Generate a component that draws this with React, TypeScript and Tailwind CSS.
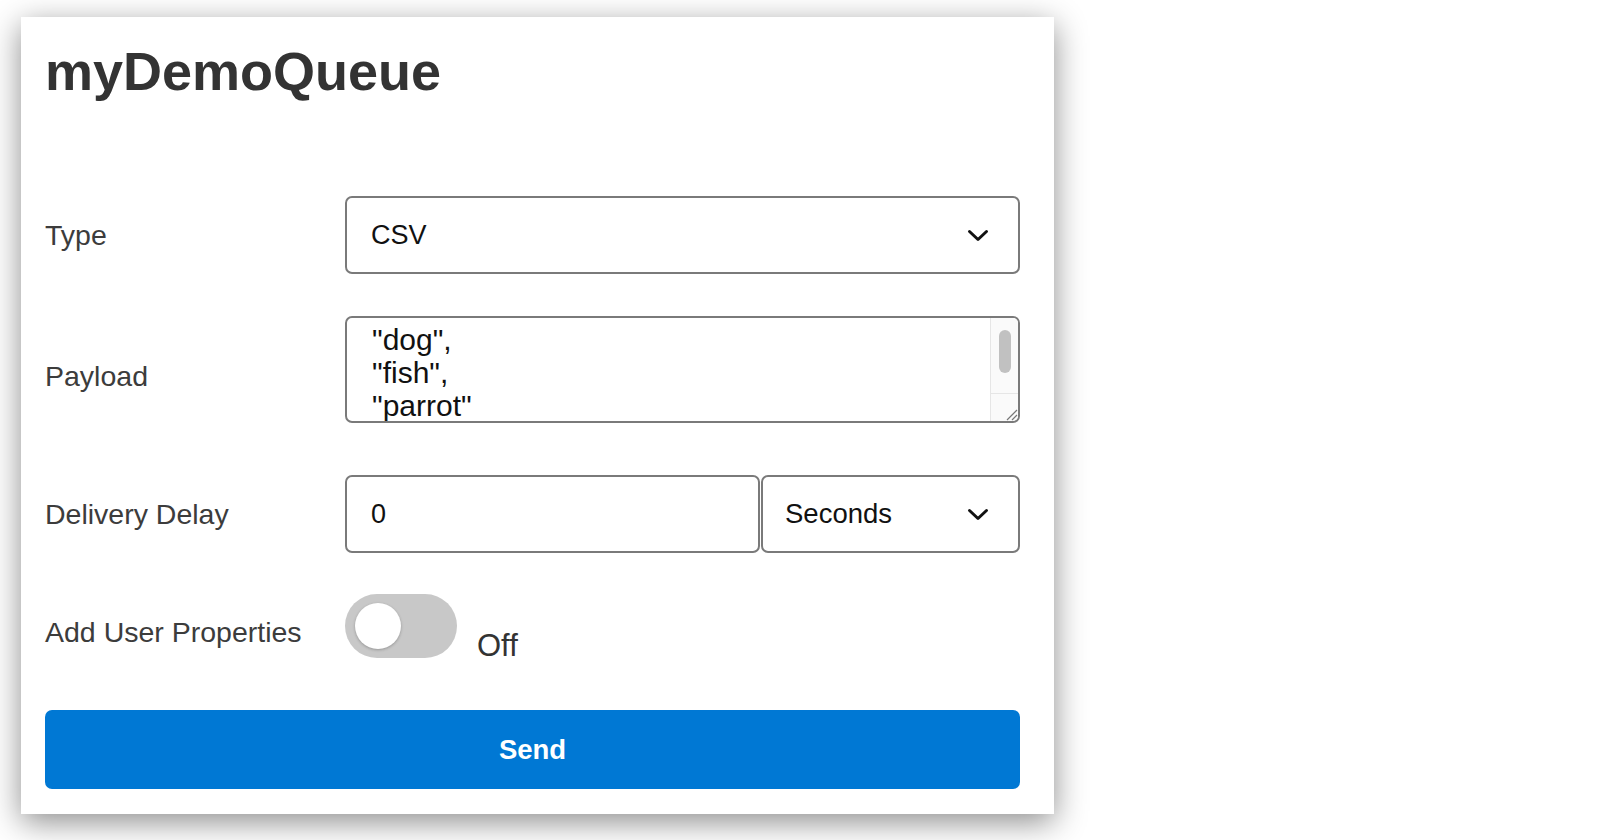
import React from "react";

function Chevron() {
  return (
    <svg width="22" height="13" viewBox="0 0 22 13" fill="none" className="shrink-0">
      <path d="M2.5 2.5 L11 10.5 L19.5 2.5" stroke="#111" strokeWidth="3" strokeLinecap="round" strokeLinejoin="round" />
    </svg>
  );
}

function Label({ children, extra = "" }: { children: React.ReactNode; extra?: string }) {
  return <div className={`w-[300px] shrink-0 text-[28.5px] text-[#3c3c3c] ${extra}`}>{children}</div>;
}

export default function App() {
  return (
    <div className="min-h-screen bg-white font-['Liberation_Sans',Arial,sans-serif] pt-[17px] pl-[21px]">
      <div className="w-[1033px] h-[797px] bg-white shadow-[0_8px_30px_rgba(0,0,0,0.45)] pl-[24px] pr-[34px] pt-[23px]">
        <h1 className="text-[54px] font-bold leading-[62px] text-[#333]">myDemoQueue</h1>

        <div className="mt-[94px] flex items-center">
          <Label>Type</Label>
          <div className="w-[675px] h-[78px] border-2 border-[#7a7a7a] rounded-[7px] pl-[24px] pr-[29px] flex items-center justify-between text-[27px] text-[#111]">
            <span>CSV</span>
            <Chevron />
          </div>
        </div>

        <div className="mt-[42px] flex items-center">
          <Label extra="mt-[13px]">Payload</Label>
          <div className="w-[675px] h-[107px] border-2 border-[#7a7a7a] rounded-[7px] flex overflow-hidden">
            <div className="flex-1 pl-[25px] pt-[5px] text-[30px] leading-[33px] text-[#111]">
              <div>"dog",</div>
              <div>"fish",</div>
              <div>"parrot"</div>
            </div>
            <div className="w-[28px] shrink-0 border-l border-[#e6e6e6] bg-[#fafafa] flex flex-col">
              <div className="flex-1 flex justify-center pt-[12px]">
                <div className="w-[12px] h-[43px] rounded-full bg-[#c1c1c1]" />
              </div>
              <div className="h-[28px] border-t border-[#e6e6e6] flex items-end justify-end">
                <svg width="14" height="14" viewBox="0 0 14 14">
                  <path d="M13 3 L3 13 M13 8 L8 13" stroke="#777" strokeWidth="1.2" />
                </svg>
              </div>
            </div>
          </div>
        </div>

        <div className="mt-[52px] flex items-center">
          <Label>Delivery Delay</Label>
          <div className="flex gap-[1px]">
            <div className="w-[415px] h-[78px] border-2 border-[#7a7a7a] rounded-[7px] pl-[24px] flex items-center text-[27px] text-[#111]">
              0
            </div>
            <div className="w-[259px] h-[78px] border-2 border-[#7a7a7a] rounded-[7px] pl-[22px] pr-[29px] flex items-center justify-between text-[27.5px] text-[#111]">
              <span>Seconds</span>
              <Chevron />
            </div>
          </div>
        </div>

        <div className="mt-[41px] flex items-center">
          <Label extra="mt-[12px]">Add User Properties</Label>
          <div className="flex items-end">
            <div className="w-[112px] h-[64px] rounded-full bg-[#c8c8c8] flex items-center pl-[10px]">
              <div className="w-[46px] h-[46px] rounded-full bg-white shadow-[0_1px_3px_rgba(0,0,0,0.25)]" />
            </div>
            <span className="ml-[20px] text-[31px] leading-[24px] text-[#333]">Off</span>
          </div>
        </div>

        <button className="mt-[52px] w-[975px] h-[79px] rounded-[7px] bg-[#0078d4] text-white text-[27.5px] font-bold flex items-center justify-center">
          Send
        </button>
      </div>
    </div>
  );
}
